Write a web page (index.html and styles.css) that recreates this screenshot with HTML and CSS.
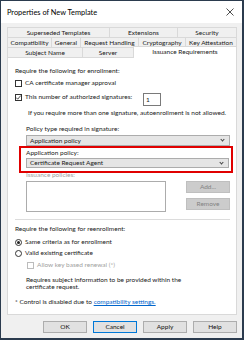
FILE: index.html
```html
<!DOCTYPE html>
<html>
<head>
<meta charset="utf-8">
<link rel="stylesheet" href="styles.css">
</head>
<body>
<div class="win">
  <div class="titlebar">
    <span class="title">Properties of New Template</span>
    <svg class="close" width="8" height="8" viewBox="0 0 8 8"><path d="M0.5 0.5L7.5 7.5M7.5 0.5L0.5 7.5" stroke="#222" stroke-width="0.8"/></svg>
  </div>
  <div class="main">
    <div class="tabs">
      <div class="tabrow">
        <div class="tab t-superseded">Superseded Templates</div>
        <div class="tab t-extensions">Extensions</div>
        <div class="tab">Security</div>
      </div>
      <div class="tabrow">
        <div class="tab t-compat">Compatibility</div>
        <div class="tab t-general">General</div>
        <div class="tab t-request">Request Handling</div>
        <div class="tab t-crypto">Cryptography</div>
        <div class="tab">Key Attestation</div>
      </div>
      <div class="tabrow">
        <div class="tab t-subject">Subject Name</div>
        <div class="tab t-server">Server</div>
        <div class="tab active">Issuance Requirements</div>
      </div>
    </div>
    <div class="panel">
      <div class="line h-enroll">Require the following for enrollment:</div>
      <div class="line check-row r-cb1"><span class="cb"></span>CA certificate manager approval</div>
      <div class="sig-row">
        <div class="line check-row"><span class="cb checked"><svg width="7" height="7" viewBox="0 0 7 7"><path d="M1.2 3.6L2.7 5.2L5.8 1.5" fill="none" stroke="#222" stroke-width="0.8"/></svg></span>This number of authorized signatures:</div>
        <div class="numbox">1</div>
      </div>
      <div class="line info">If you require more than one signature, autoenrollment is not allowed.</div>
      <div class="line indent policy-label">Policy type required in signature:</div>
      <div class="select sel1">Application policy<span class="chev"></span></div>
      <div class="highlight">
        <div class="line">Application policy:</div>
        <div class="select sel2">Certificate Request Agent<span class="chev"></span></div>
      </div>
      <div class="line indent disabled iss-label">Issuance policies:</div>
      <div class="list-row">
        <div class="listbox"></div>
        <div class="side-btns">
          <div class="btn disabled-btn">Add...</div>
          <div class="btn disabled-btn">Remove</div>
        </div>
      </div>
      <div class="sep"></div>
      <div class="line h-reenroll">Require the following for reenrollment:</div>
      <div class="line check-row r-rad1"><span class="radio on"></span>Same criteria as for enrollment</div>
      <div class="line check-row r-rad2"><span class="radio"></span>Valid existing certificate</div>
      <div class="line check-row r-cb3 disabled"><span class="cb dis"></span>Allow key based renewal (*)</div>
      <div class="indent requires">Requires subject information to be provided within the certificate request.</div>
      <div class="line control">* Control is disabled due to <span class="link">compatibility settings.</span></div>
    </div>
    <div class="buttons">
      <div class="btn">OK</div>
      <div class="btn default">Cancel</div>
      <div class="btn">Apply</div>
      <div class="btn">Help</div>
    </div>
  </div>
</div>
</body>
</html>
```
FILE: styles.css
```css
* { box-sizing: border-box; }
html, body { margin: 0; padding: 0; }
body {
  width: 244px;
  height: 340px;
  overflow: hidden;
  font-family: Lato, "Noto Sans", sans-serif;
  font-size: 6.5px;
  color: #1a1a1a;
  background: #fff;
}
.win {
  width: 244px;
  height: 340px;
  border-left: 1px solid #2b3b4e;
  border-top: 1px solid #2b3b4e;
  border-right: 2px solid #2b3b4e;
  border-bottom: 2px solid #2b3b4e;
  display: flex;
  flex-direction: column;
  background: #f0f0f0;
}
.titlebar {
  height: 22px;
  background: #fff;
  display: flex;
  align-items: center;
  justify-content: space-between;
  padding: 0 8px 0 6px;
  flex: none;
}
.title { font-size: 7.4px; color: #000; }
.close { display: block; }
.main {
  flex: 1;
  display: flex;
  flex-direction: column;
  padding: 4px 5px 0 6px;
}
.tabs { display: flex; flex-direction: column; }
.tabrow { display: flex; height: 10px; }
.tab {
  flex: 1 1 0;
  border: 1px solid #d9d9d9;
  border-right: none;
  border-bottom: none;
  background: #f0f0f0;
  text-align: center;
  line-height: 9px;
  white-space: nowrap;
  padding: 0 1px;
}
.t-superseded { flex: none; width: 102px; }
.t-extensions { flex: none; width: 68px; }
.t-compat { flex: none; width: 44px; }
.t-general { flex: none; width: 29px; }
.t-request { flex: none; width: 58px; }
.t-crypto { flex: none; width: 47px; }
.t-subject { flex: none; width: 75px; }
.t-server { flex: none; width: 51px; }
.tab:last-child { border-right: 1px solid #d9d9d9; }
.tab.active {
  background: #fff;
  position: relative;
  z-index: 1;
  margin-top: -1px;
  height: 12px;
  line-height: 10px;
}
.panel {
  height: 258px;
  background: #fff;
  border: 1px solid #d9d9d9;
  padding: 9px 6px 0 7px;
  display: flex;
  flex-direction: column;
}
.line { height: 8px; line-height: 8px; white-space: nowrap; }
.check-row { display: flex; align-items: center; gap: 3px; }
.cb {
  width: 7px; height: 7px;
  border: 1px solid #333;
  background: #fff;
  flex: none;
  display: flex;
  align-items: center;
  justify-content: center;
}
.cb svg { display: block; margin: -1px; }
.cb.dis { border-color: #bcbcbc; }
.radio {
  width: 7px; height: 7px;
  border: 1px solid #333;
  border-radius: 50%;
  flex: none;
  display: flex;
  align-items: center;
  justify-content: center;
}
.radio.on::after {
  content: "";
  width: 3px; height: 3px;
  border-radius: 50%;
  background: #222;
}
.r-cb1 { margin-top: 4px; }
.sig-row { display: flex; align-items: flex-start; margin-top: 6px; }
.sig-row .check-row { width: 128px; }
.numbox {
  width: 18px; height: 13px;
  border: 1px solid #7a7a7a;
  background: #fff;
  padding: 2px 0 0 2px;
  line-height: 8px;
}
.info { margin-top: 3px; padding-left: 13px; }
.indent { padding-left: 11px; }
.policy-label { margin-top: 8px; }
.select {
  margin-left: 11px;
  height: 11px;
  border: 1px solid #acacac;
  background: #e5e5e5;
  display: flex;
  align-items: center;
  justify-content: space-between;
  padding: 0 5px 0 3px;
  line-height: 8px;
}
.sel1 { margin-top: 2px; color: #222; }
.chev {
  width: 3px; height: 3px;
  border-right: 0.8px solid #444;
  border-bottom: 0.8px solid #444;
  transform: rotate(45deg);
  margin-top: -2px;
}
.highlight {
  position: relative;
  z-index: 1;
  border: 2px solid #e00000;
  margin: 0 -3px 0 4px;
  padding: 1px 2px 3px 5px;
}
.highlight .select { margin-left: 0; height: 10px; margin-top: 1px; }
.disabled { color: #a0a0a0; }
.iss-label { margin-top: -2px; }
.list-row { display: flex; justify-content: space-between; margin-top: 2px; padding-left: 11px; }
.listbox {
  width: 140px; height: 31px;
  border: 1px solid #acacac;
  background: #fff;
}
.side-btns { display: flex; flex-direction: column; gap: 5px; }
.btn {
  width: 44px; height: 12px;
  border: 1px solid #adadad;
  background: #e1e1e1;
  text-align: center;
  line-height: 10px;
  color: #111;
}
.disabled-btn { background: #cccccc; border-color: #bfbfbf; color: #838383; }
.sep { height: 2px; border-top: 1px solid #dcdcdc; background: #fff; margin-top: 7px; }
.h-reenroll { margin-top: 4px; }
.r-rad1 { margin-top: 5px; }
.r-rad2 { margin-top: 3px; }
.r-cb3 { margin-top: 4px; padding-left: 12px; }
.requires { margin-top: 7px; line-height: 7px; padding-right: 20px; }
.control { margin-top: 8px; }
.link { color: #0066cc; text-decoration: underline; }
.buttons {
  display: flex;
  justify-content: flex-end;
  gap: 6px;
  margin-top: 6px;
  padding-right: 0;
}
.btn.default { border-color: #0078d7; }
```
